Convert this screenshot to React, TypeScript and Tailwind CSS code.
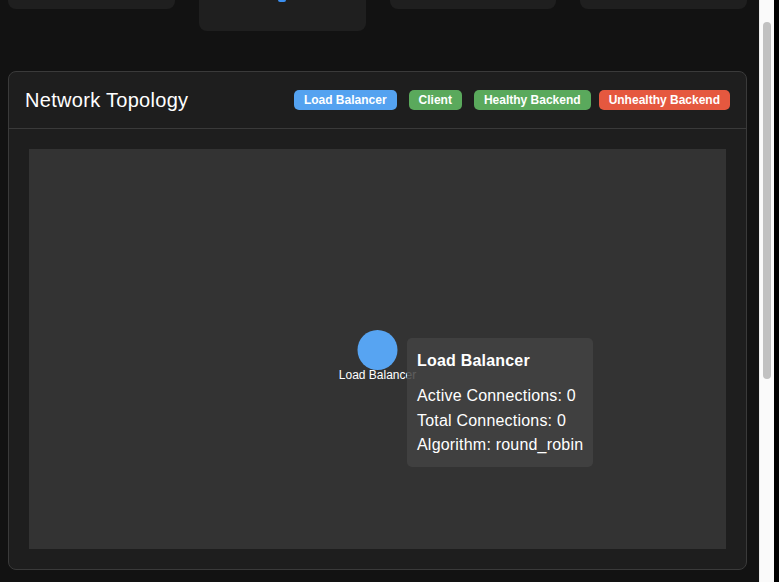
const legend = [
  { label: "Load Balancer", color: "bg-[#54a2f0]", gap: "" },
  { label: "Client", color: "bg-[#5aa95c]", gap: "ml-3" },
  { label: "Healthy Backend", color: "bg-[#5aa95c]", gap: "ml-3" },
  { label: "Unhealthy Backend", color: "bg-[#e5583f]", gap: "ml-2" },
];

function StatCards() {
  // the page is scrolled down, only the bottoms of the stat cards show
  return (
    <div className="grid grid-cols-4 gap-6 items-start">
      <div className="h-[9px] rounded-b-lg bg-[#1f1f1f]" />
      <div className="h-[31px] rounded-b-lg bg-[#1f1f1f] flex justify-center">
        <div className="w-2 h-[2px] rounded-b-full bg-[#3b8ff0]" />
      </div>
      <div className="h-[9px] rounded-b-lg bg-[#1f1f1f]" />
      <div className="h-[9px] rounded-b-lg bg-[#1f1f1f]" />
    </div>
  );
}

function Tooltip() {
  return (
    <div className="absolute left-[378px] top-[189px] rounded-[5px] bg-[rgba(66,66,66,0.86)] p-[10px] text-white text-base tracking-[0.2px]">
      <div className="font-bold leading-[26px] mb-[9px]">Load Balancer</div>
      <div className="leading-[25px]">Active Connections: 0</div>
      <div className="leading-[25px]">Total Connections: 0</div>
      <div className="leading-[24px]">Algorithm: round_robin</div>
    </div>
  );
}

function Topology() {
  return (
    <div className="mt-10 rounded-lg border border-[#3a3a3a] bg-[#1e1e1e]">
      <div className="flex items-center justify-between px-4 py-4 border-b border-[#3a3a3a]">
        <h2 className="text-xl leading-6 text-white tracking-[0.3px]">Network Topology</h2>
        <div className="flex items-center">
          {legend.map((l) => (
            <span
              key={l.label}
              className={`${l.gap} ${l.color} rounded-[5px] px-[10px] text-xs leading-5 font-bold text-white`}
            >
              {l.label}
            </span>
          ))}
        </div>
      </div>
      <div className="p-5">
        <div className="relative h-[400px] bg-[#333333]">
          <svg className="absolute inset-0 w-full h-full">
            <circle cx="348.5" cy="201" r="20" fill="#57a4f2" />
            <text
              x="348.5"
              y="230"
              textAnchor="middle"
              fontSize="12"
              fill="#ffffff"
              fontFamily="'Liberation Sans', Arial, sans-serif"
            >
              Load Balancer
            </text>
          </svg>
          <Tooltip />
        </div>
      </div>
    </div>
  );
}

export default function App() {
  return (
    <div className="flex w-[779px] h-[582px] overflow-hidden font-['Liberation_Sans',Arial,sans-serif]">
      <div className="flex-1 bg-[#121212] pl-2 pr-3">
        <StatCards />
        <Topology />
      </div>
      <div className="w-[15px] bg-[#fafafa] border-l border-[#ececec] pt-[22px]">
        <div className="ml-[3px] w-2 h-[357px] rounded-full bg-[#c1c1c1]" />
      </div>
      <div className="w-[5px] bg-black" />
    </div>
  );
}
